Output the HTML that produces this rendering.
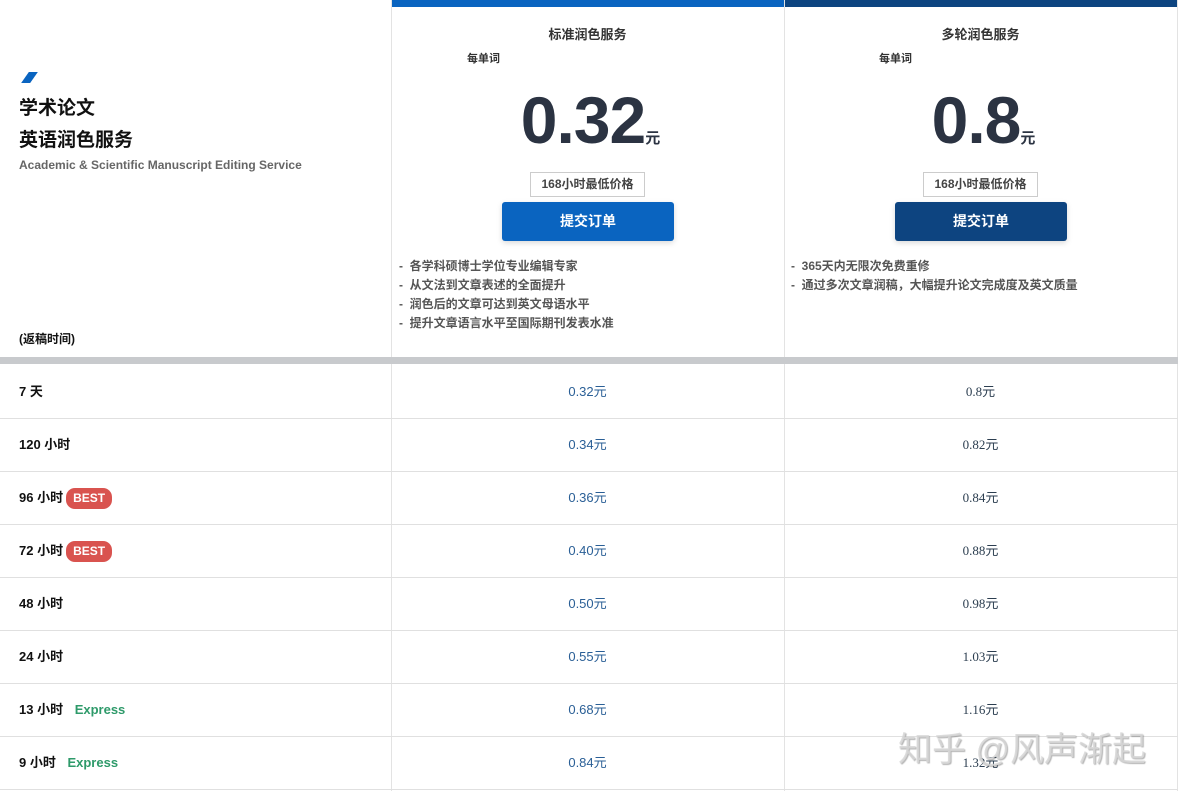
<!DOCTYPE html>
<html><head><meta charset="utf-8"><style>
*{margin:0;padding:0;box-sizing:border-box}
body{width:1180px;height:791px;background:#fff;font-family:"Liberation Sans","Noto Sans CJK SC",sans-serif;position:relative;overflow:hidden;color:#222}
.a{position:absolute}
.vl{position:absolute;top:0;width:1px;height:791px;background:#e3e3e3}
.hl{position:absolute;left:0;width:1178px;height:1px;background:#e0e0e0}
.row{position:absolute;left:19px;font-size:13px;font-weight:bold;color:#111;height:20px;line-height:20px}
.v{position:absolute;width:393px;text-align:center;font-size:13px;line-height:20px}
.best{display:inline-block;background:#d9534f;color:#fff;border-radius:9px;font-size:12px;padding:0 7px;height:21px;line-height:21px;margin-left:3px;vertical-align:middle}
.exp{color:#2e9a6a;font-size:13px;margin-left:8px}
.ttl{position:absolute;width:393px;text-align:center;font-size:13px;font-weight:bold;color:#333}
.pw{position:absolute;font-size:11px;font-weight:bold;color:#333}
.price{position:absolute;width:393px;text-align:center;font-size:66px;font-weight:bold;color:#2b3342;letter-spacing:-1px}
.price small{font-size:15px;letter-spacing:0}
.tag{position:absolute;border:1px solid #ccc;font-size:12px;font-weight:bold;color:#444;text-align:center;height:25px;line-height:23px}
.btn{position:absolute;height:39px;border-radius:3px;color:#fff;font-size:14px;font-weight:bold;text-align:center;line-height:39px;box-shadow:0 2px 6px rgba(0,0,0,.15)}
.li{position:absolute;font-size:12px;font-weight:bold;color:#555;line-height:19px}
</style></head><body>
<div class="a" style="left:391px;top:0;width:393px;height:7px;background:#0a64c0"></div>
<div class="a" style="left:784px;top:0;width:394px;height:7px;background:#0d4480"></div>
<div class="vl" style="left:391px"></div>
<div class="vl" style="left:784px"></div>
<div class="vl" style="left:1177px"></div>
<div class="a" style="left:0;top:357px;width:1178px;height:7px;background:#c8cacd"></div>

<div class="a" style="left:25px;top:72px;width:9px;height:11px;background:#0a64c0;transform:skewX(-35deg)"></div>
<div class="a" style="left:19px;top:93px;font-size:19px;font-weight:bold;color:#111">学术论文</div>
<div class="a" style="left:19px;top:125px;font-size:19px;font-weight:bold;color:#111">英语润色服务</div>
<div class="a" style="left:19px;top:158px;font-size:12px;font-weight:bold;color:#666">Academic &amp; Scientific Manuscript Editing Service</div>
<div class="a" style="left:19px;top:330px;font-size:12px;font-weight:bold;color:#111">(返稿时间)</div>

<div class="ttl" style="left:391px;top:24px">标准润色服务</div>
<div class="pw" style="left:467px;top:50px">每单词</div>
<div class="price" style="left:394px;top:82px">0.32<small>元</small></div>
<div class="tag" style="left:530px;top:172px;width:115px">168小时最低价格</div>
<div class="btn" style="left:502px;top:202px;width:172px;background:#0a64c0">提交订单</div>
<div class="li" style="left:399px;top:257px">-&nbsp; 各学科硕博士学位专业编辑专家<br>-&nbsp; 从文法到文章表述的全面提升<br>-&nbsp; 润色后的文章可达到英文母语水平<br>-&nbsp; 提升文章语言水平至国际期刊发表水准</div>

<div class="ttl" style="left:784px;top:24px">多轮润色服务</div>
<div class="pw" style="left:879px;top:50px">每单词</div>
<div class="price" style="left:787px;top:82px">0.8<small>元</small></div>
<div class="tag" style="left:923px;top:172px;width:115px">168小时最低价格</div>
<div class="btn" style="left:895px;top:202px;width:172px;background:#0d4480">提交订单</div>
<div class="li" style="left:791px;top:257px">-&nbsp; 365天内无限次免费重修<br>-&nbsp; 通过多次文章润稿，大幅提升论文完成度及英文质量</div>

<div class="hl" style="top:418px"></div><div class="hl" style="top:471px"></div><div class="hl" style="top:524px"></div><div class="hl" style="top:577px"></div><div class="hl" style="top:630px"></div><div class="hl" style="top:683px"></div><div class="hl" style="top:736px"></div><div class="hl" style="top:789px"></div>

<div class="row" style="top:382px">7 天</div>
<div class="row" style="top:435px">120 小时</div>
<div class="row" style="top:488px">96 小时<span class="best">BEST</span></div>
<div class="row" style="top:541px">72 小时<span class="best">BEST</span></div>
<div class="row" style="top:594px">48 小时</div>
<div class="row" style="top:647px">24 小时</div>
<div class="row" style="top:700px">13 小时 <span class="exp">Express</span></div>
<div class="row" style="top:753px">9 小时 <span class="exp">Express</span></div>

<div style="color:#2a5f96">
<div class="v" style="left:391px;top:382px">0.32元</div>
<div class="v" style="left:391px;top:435px">0.34元</div>
<div class="v" style="left:391px;top:488px">0.36元</div>
<div class="v" style="left:391px;top:541px">0.40元</div>
<div class="v" style="left:391px;top:594px">0.50元</div>
<div class="v" style="left:391px;top:647px">0.55元</div>
<div class="v" style="left:391px;top:700px">0.68元</div>
<div class="v" style="left:391px;top:753px">0.84元</div>
</div>
<div style="color:#2c3e50;font-family:'Liberation Serif','Noto Sans CJK SC',serif">
<div class="v" style="left:784px;top:382px">0.8元</div>
<div class="v" style="left:784px;top:435px">0.82元</div>
<div class="v" style="left:784px;top:488px">0.84元</div>
<div class="v" style="left:784px;top:541px">0.88元</div>
<div class="v" style="left:784px;top:594px">0.98元</div>
<div class="v" style="left:784px;top:647px">1.03元</div>
<div class="v" style="left:784px;top:700px">1.16元</div>
<div class="v" style="left:784px;top:753px">1.32元</div>
</div>
<div class="a" style="left:898px;top:722px;font-size:34px;color:rgba(215,215,215,.85);text-shadow:1px 1px 1px rgba(90,90,90,.45);white-space:nowrap">知乎 @风声渐起</div>
</body></html>
